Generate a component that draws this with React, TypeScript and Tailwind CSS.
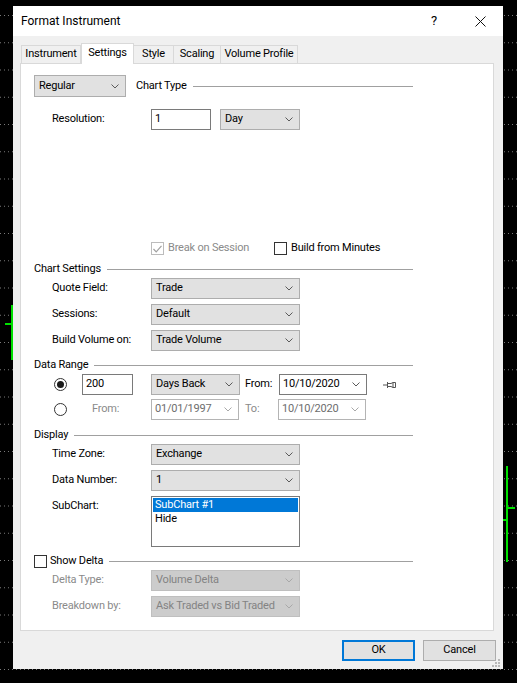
import React from 'react';

// Chart backdrop behind the dialog: dotted grid rows and a couple of green bars
function ChartBackdrop() {
  const rows = Array.from({ length: 25 }, (_, i) => 15.5 + i * 27.25);
  return (
    <svg className="absolute inset-0" width="517" height="683" viewBox="0 0 517 683">
      {rows.map((y) => (
        <line key={y} x1="0" y1={y} x2="517" y2={y} stroke="#7a7a7a" strokeWidth="1" strokeDasharray="1 3" />
      ))}
      <rect x="11" y="305" width="2" height="55" fill="#00e000" />
      <rect x="5" y="323" width="7" height="2" fill="#00e000" />
      <rect x="506" y="466" width="2" height="96" fill="#00e000" />
      <rect x="508" y="507" width="7" height="2" fill="#00e000" />
      <rect x="503" y="519" width="3" height="2" fill="#00e000" />
    </svg>
  );
}

function Chevron({ disabled = false }: { disabled?: boolean }) {
  return (
    <svg width="8" height="5" viewBox="0 0 8 5">
      <polyline points="0.5,0.5 4,4 7.5,0.5" fill="none" stroke={disabled ? '#a8a8a8' : '#5a5a5a'} strokeWidth="1" />
    </svg>
  );
}

interface SelectProps {
  value: string;
  className?: string;
  disabled?: boolean;
  tall?: boolean;
}

function Select({ value, className = '', disabled = false, tall = false }: SelectProps) {
  return (
    <div
      className={`flex items-center justify-between border pl-[4px] pr-[6px] ${tall ? 'h-[22px]' : 'h-[21px]'} ${
        disabled ? 'bg-[#cccccc] border-[#bfbfbf] text-[#838383]' : 'bg-[#e1e1e1] border-[#adadad] text-black'
      } ${className}`}
    >
      <span className="whitespace-nowrap">{value}</span>
      <Chevron disabled={disabled} />
    </div>
  );
}

function DateBox({ value, disabled = false }: { value: string; disabled?: boolean }) {
  return (
    <div
      className={`flex items-center justify-between w-[88px] h-[21px] border bg-white pl-[3px] pr-[6px] ${
        disabled ? 'border-[#b4b4b4] text-[#6d6d6d]' : 'border-[#7a7a7a] text-black'
      }`}
    >
      <span>{value}</span>
      <Chevron disabled={disabled} />
    </div>
  );
}

function SectionHeader({ title, checkbox = false }: { title: string; checkbox?: boolean }) {
  return (
    <div className="flex items-center w-[379px] h-[14px]">
      {checkbox && <div className="w-[13px] h-[13px] border border-[#333333] bg-white mr-[3px]" />}
      <span className="whitespace-nowrap">{title}</span>
      <div className="flex-1 h-px bg-[#a0a0a0] ml-[6px]" />
    </div>
  );
}

function FieldRow({ label, children, className = '', muted = false }: { label: string; children: React.ReactNode; className?: string; muted?: boolean }) {
  return (
    <div className={`flex items-center ${className}`}>
      <span className={`ml-[18px] w-[99px] whitespace-nowrap ${muted ? 'text-[#8a8a8a]' : ''}`}>{label}</span>
      {children}
    </div>
  );
}

function Radio({ checked = false }: { checked?: boolean }) {
  return (
    <div className="w-[13px] h-[13px] rounded-full border border-[#333333] bg-white flex items-center justify-center">
      {checked && <div className="w-[7px] h-[7px] rounded-full bg-[#1a1a1a]" />}
    </div>
  );
}

function PinIcon() {
  return (
    <svg width="14" height="8" viewBox="0 0 14 8">
      <line x1="0" y1="4" x2="4" y2="4" stroke="#555" />
      <line x1="4.5" y1="1" x2="4.5" y2="7" stroke="#555" />
      <path d="M5 2.5 H8 L10 1.5 V6.5 L8 5.5 H5" fill="none" stroke="#555" />
      <line x1="12.5" y1="1.5" x2="12.5" y2="6.5" stroke="#555" />
      <line x1="10" y1="1.5" x2="12.5" y2="1.5" stroke="#555" />
      <line x1="10" y1="6.5" x2="12.5" y2="6.5" stroke="#555" />
    </svg>
  );
}

const tabs = [
  { name: 'Instrument', w: 'w-[60px]' },
  { name: 'Settings', w: 'w-[53px]' },
  { name: 'Style', w: 'w-[40px]' },
  { name: 'Scaling', w: 'w-[47px]' },
  { name: 'Volume Profile', w: 'w-[77px]' },
];

export default function App() {
  return (
    <div className="relative w-[517px] h-[683px] bg-black overflow-hidden font-['Roboto',sans-serif] text-[11px] tracking-[-0.2px] text-black">
      <ChartBackdrop />

      <div className="relative ml-[13px] mt-[6px] w-[490px] h-[663px] bg-[#f0f0f0] flex flex-col">
        {/* Title bar */}
        <div className="h-[30px] bg-white flex items-center pl-[8px] shrink-0">
          <span className="text-[12px] tracking-normal">Format Instrument</span>
          <span className="ml-auto text-[13px] mr-[38px]">?</span>
          <svg width="11" height="11" viewBox="0 0 11 11" className="mr-[17px]">
            <line x1="0.5" y1="0.5" x2="10.5" y2="10.5" stroke="#111" strokeWidth="1" />
            <line x1="10.5" y1="0.5" x2="0.5" y2="10.5" stroke="#111" strokeWidth="1" />
          </svg>
        </div>

        {/* Tabs */}
        <div className="flex items-end ml-[8px] mt-[7px] h-[20px] shrink-0">
          {tabs.map((t) =>
            t.name === 'Settings' ? (
              <div
                key={t.name}
                className={`${t.w} h-[21px] -mb-px pb-[2px] relative z-10 bg-white border border-b-0 border-[#d9d9d9] flex items-center justify-center whitespace-nowrap`}
              >
                {t.name}
              </div>
            ) : (
              <div
                key={t.name}
                className={`${t.w} h-[18px] bg-[#f0f0f0] border border-b-0 border-l-0 first:border-l border-[#d9d9d9] flex items-center justify-center whitespace-nowrap`}
              >
                {t.name}
              </div>
            )
          )}
        </div>

        {/* Tab panel */}
        <div className="ml-[7px] w-[474px] h-[568px] bg-white border border-[#d9d9d9] pl-[13px] flex flex-col shrink-0">
          <div className="flex items-center mt-[11px] w-[379px]">
            <Select value="Regular" className="w-[92px]" tall />
            <span className="ml-[10px] whitespace-nowrap">Chart Type</span>
            <div className="flex-1 h-px bg-[#a0a0a0] ml-[6px]" />
          </div>

          <FieldRow label="Resolution:" className="mt-[12px]">
            <div className="w-[60px] h-[21px] border border-[#7a7a7a] bg-white pl-[3px] flex items-center">1</div>
            <Select value="Day" className="w-[80px] ml-[9px]" />
          </FieldRow>

          <div className="flex items-center mt-[112px] h-[13px] ml-[117px]">
            <div className="flex items-center w-[123px]">
              <div className="w-[13px] h-[13px] border border-[#bcbcbc] bg-white flex items-center justify-center">
                <svg width="9" height="8" viewBox="0 0 9 8">
                  <polyline points="0.5,4 3.2,6.8 8.5,0.8" fill="none" stroke="#a0a0a0" strokeWidth="1.2" />
                </svg>
              </div>
              <span className="ml-[4px] text-[#8a8a8a] whitespace-nowrap">Break on Session</span>
            </div>
            <div className="w-[13px] h-[13px] border border-[#333333] bg-white" />
            <span className="ml-[4px] whitespace-nowrap">Build from Minutes</span>
          </div>

          <div className="mt-[7px]">
            <SectionHeader title="Chart Settings" />
          </div>
          <FieldRow label="Quote Field:" className="mt-[2px]">
            <Select value="Trade" className="w-[149px]" />
          </FieldRow>
          <FieldRow label="Sessions:" className="mt-[5px]">
            <Select value="Default" className="w-[149px]" />
          </FieldRow>
          <FieldRow label="Build Volume on:" className="mt-[5px]">
            <Select value="Trade Volume" className="w-[149px]" />
          </FieldRow>

          <div className="mt-[7px]">
            <SectionHeader title="Data Range" />
          </div>
          <div className="flex items-center mt-[2px] h-[21px]">
            <div className="ml-[20px]">
              <Radio checked />
            </div>
            <div className="ml-[15px] w-[51px] h-[21px] border border-[#7a7a7a] bg-white pl-[3px] flex items-center">200</div>
            <Select value="Days Back" className="w-[89px] ml-[18px]" />
            <span className="ml-[5px] w-[34px]">From:</span>
            <DateBox value="10/10/2020" />
            <div className="ml-[16px] flex items-center">
              <PinIcon />
            </div>
          </div>
          <div className="flex items-center mt-[4px] h-[21px]">
            <div className="ml-[20px]">
              <Radio />
            </div>
            <span className="ml-[25px] w-[59px] text-[#8a8a8a]">From:</span>
            <DateBox value="01/01/1997" disabled />
            <span className="ml-[6px] w-[33px] text-[#8a8a8a]">To:</span>
            <DateBox value="10/10/2020" disabled />
          </div>

          <div className="mt-[8px]">
            <SectionHeader title="Display" />
          </div>
          <FieldRow label="Time Zone:" className="mt-[2px]">
            <Select value="Exchange" className="w-[149px]" />
          </FieldRow>
          <FieldRow label="Data Number:" className="mt-[5px]">
            <Select value="1" className="w-[149px]" />
          </FieldRow>
          <div className="flex items-start mt-[5px]">
            <span className="ml-[18px] w-[99px] mt-[2px]">SubChart:</span>
            <div className="w-[149px] h-[51px] border border-[#7a7a7a] bg-white p-[1px] flex flex-col">
              <div className="h-[14px] bg-[#0078d7] text-white pl-[2px] flex items-center">SubChart #1</div>
              <div className="h-[14px] pl-[2px] flex items-center">Hide</div>
            </div>
          </div>

          <div className="mt-[7px]">
            <SectionHeader title="Show Delta" checkbox />
          </div>
          <FieldRow label="Delta Type:" className="mt-[2px]" muted>
            <Select value="Volume Delta" className="w-[149px]" disabled />
          </FieldRow>
          <FieldRow label="Breakdown by:" className="mt-[5px]" muted>
            <Select value="Ask Traded vs Bid Traded" className="w-[149px]" disabled />
          </FieldRow>
        </div>

        {/* Buttons */}
        <div className="flex mt-[9px] ml-[329px]">
          <div className="w-[73px] h-[21px] border-2 border-[#0078d7] bg-[#e1e1e1] flex items-center justify-center">OK</div>
          <div className="w-[73px] h-[21px] ml-[8px] border border-[#adadad] bg-[#e1e1e1] flex items-center justify-center">Cancel</div>
        </div>

        {/* Resize grip */}
        <svg className="absolute right-[3px] bottom-[2px]" width="8" height="8" viewBox="0 0 8 8">
          <rect x="6" y="0" width="2" height="2" fill="#b8b8b8" />
          <rect x="3" y="3" width="2" height="2" fill="#b8b8b8" />
          <rect x="6" y="3" width="2" height="2" fill="#b8b8b8" />
          <rect x="0" y="6" width="2" height="2" fill="#b8b8b8" />
          <rect x="3" y="6" width="2" height="2" fill="#b8b8b8" />
          <rect x="6" y="6" width="2" height="2" fill="#b8b8b8" />
        </svg>
      </div>
    </div>
  );
}
